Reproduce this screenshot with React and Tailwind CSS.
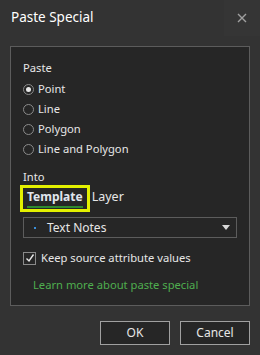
import { useState } from "react";

const Radio = ({ label, checked, onClick }) => (
  <button onClick={onClick} className="flex items-center gap-[4px] h-[20px] text-left">
    <span className="w-[11px] h-[11px] rounded-full border border-[#8a8a8a] flex items-center justify-center">
      {checked && <span className="w-[5px] h-[5px] rounded-full bg-[#e8e8e8]" />}
    </span>
    <span>{label}</span>
  </button>
);

export default function App() {
  const [shape, setShape] = useState("Point");
  const [keep, setKeep] = useState(true);

  return (
    <div
      className="w-[260px] h-[355px] bg-[#333333] text-[#e6e6e6] flex flex-col text-[11.2px] overflow-hidden"
      style={{ fontFamily: '"Noto Sans", "Open Sans", sans-serif' }}
    >
      {/* Title bar */}
      <div className="h-[36px] flex items-center justify-between pl-[11px]">
        <span className="text-[13.5px] text-white leading-none">Paste Special</span>
        <button className="w-[36px] h-[36px] flex items-center justify-center text-[#a0a0a0] bg-[#353535]">
          <svg width="10" height="10" viewBox="0 0 10 10" stroke="currentColor" strokeWidth="1.4">
            <path d="M1 1L9 9M9 1L1 9" />
          </svg>
        </button>
      </div>

      {/* Body */}
      <div className="mt-[10px] mx-[10px] h-[260px] border border-[#5c5c5c] bg-[#262626] pl-[12px] pr-[12px] pt-[12px] flex flex-col">
        <div className="h-[18px] leading-[18px]">Paste</div>
        <div className="flex flex-col mt-[2px]">
          {["Point", "Line", "Polygon", "Line and Polygon"].map((s) => (
            <Radio key={s} label={s} checked={shape === s} onClick={() => setShape(s)} />
          ))}
        </div>

        <div className="mt-[9px] h-[18px] leading-[18px]">Into</div>
        <div className="flex items-center mt-[-1px] ml-[-3px]">
          <div className="border-[3px] border-[#e3f000] px-[2px] h-[27px] flex flex-col justify-center">
            <span className="text-[12px] font-bold text-[#e0e6ee] leading-[16px] px-[2px]">Template</span>
            <span className="h-[2px] bg-[#2f8a2f] mx-[2px] mt-[1px]" />
          </div>
          <span className="text-[12.5px] ml-[2px] mb-[3px]">Layer</span>
        </div>

        <div className="mt-[5px] h-[21px] border border-[#5c5c5c] flex items-center pl-[10px] pr-[6px]">
          <span className="w-[2px] h-[2px] bg-[#3b8fd9] mr-[11px]" />
          <span className="flex-1 text-[12px]">Text Notes</span>
          <svg width="8" height="5" viewBox="0 0 8 5" className="text-[#d8d8d8]">
            <path d="M0 0H8L4 5Z" fill="currentColor" />
          </svg>
        </div>

        <button onClick={() => setKeep(!keep)} className="mt-[12px] flex items-center gap-[5px] text-left">
          <span className="w-[13px] h-[13px] border border-[#8a8a8a] flex items-center justify-center">
            {keep && (
              <svg width="10" height="10" viewBox="0 0 10 10" fill="none" stroke="#e8e8e8" strokeWidth="1.4">
                <path d="M1.5 5.5L4 8L8.5 1.5" />
              </svg>
            )}
          </span>
          <span>Keep source attribute values</span>
        </button>

        <a className="mt-[10px] ml-[10px] text-[#4fae4f]">Learn more about paste special</a>
      </div>

      {/* Buttons */}
      <div className="flex justify-end gap-[10px] pr-[10px] mt-[15px]">
        <button className="w-[70px] h-[24px] border border-[#a0a0a0] bg-[#262626] text-[12px]">OK</button>
        <button className="w-[70px] h-[24px] border border-[#a0a0a0] bg-[#262626] text-[12px]">Cancel</button>
      </div>
    </div>
  );
}
